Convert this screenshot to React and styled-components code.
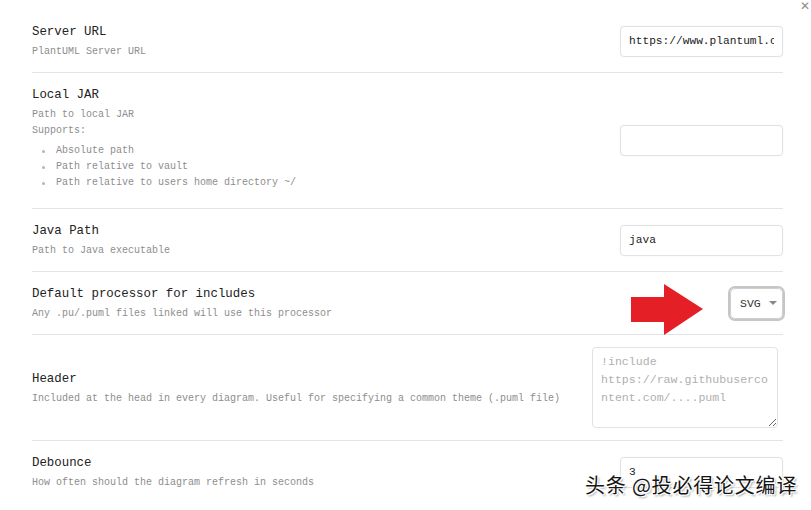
import styled, { createGlobalStyle } from "styled-components";

const Global = createGlobalStyle`
  html, body {
    margin: 0;
    padding: 0;
    background: #fff;
    overflow: hidden;
  }
  body {
    font-family: "Liberation Mono", "DejaVu Sans Mono", monospace;
  }
`;

const Modal = styled.div`
  position: relative;
  width: 811px;
  height: 510px;
  overflow: hidden;
  background: #fff;
`;

const Close = styled.div`
  position: absolute;
  top: 0;
  right: 1px;
  font-family: "DejaVu Sans", sans-serif;
  font-size: 12px;
  color: #8c8c8c;
  line-height: 13px;
`;

const List = styled.div`
  display: flex;
  flex-direction: column;
  padding: 10px 28px 0 32px;
`;

const Row = styled.div`
  position: relative;
  display: flex;
  align-items: center;
  justify-content: space-between;
  padding: 12px 0;
  border-bottom: ${(p) => (p.last ? "none" : "1px solid #e4e4e4")};
`;

const Info = styled.div`
  display: flex;
  flex-direction: column;
`;

const Title = styled.div`
  font-size: 12.4px;
  line-height: 20px;
  color: #222;
  margin-bottom: 2px;
`;

const Desc = styled.div`
  font-size: 10px;
  line-height: 16px;
  color: #8d8d8d;
`;

const Bullets = styled.ul`
  list-style: none;
  margin: 4px 0 5px;
  padding: 0;
`;

const Bullet = styled.li`
  display: flex;
  align-items: center;
  font-size: 10px;
  line-height: 16px;
  color: #8d8d8d;
`;

const Dot = styled.span`
  width: 3px;
  height: 3px;
  border-radius: 50%;
  background: #b5b5b5;
  margin: 0 11px 0 10px;
`;

const TextInput = styled.input`
  box-sizing: border-box;
  width: 163px;
  height: 31px;
  padding: 0 8px;
  border: 1px solid #e2e2e2;
  border-radius: 4px;
  box-shadow: 0 0 2px rgba(0, 0, 0, 0.06);
  font-family: "Liberation Mono", monospace;
  font-size: 11.2px;
  color: #222;
  outline: none;
`;

const Area = styled.textarea`
  box-sizing: border-box;
  width: 186px;
  height: 81px;
  margin-right: 5px;
  padding: 5px 8px;
  border: 1px solid #e2e2e2;
  border-radius: 4px;
  font-family: "Liberation Mono", monospace;
  font-size: 11.6px;
  line-height: 18px;
  color: #222;
  resize: both;
  outline: none;
  &::placeholder {
    color: #b0b0b0;
  }
`;

const Select = styled.div`
  box-sizing: border-box;
  width: 53px;
  height: 31px;
  display: flex;
  align-items: center;
  gap: 8px;
  padding-left: 9px;
  border: 1px solid #cfcfcf;
  border-radius: 5px;
  box-shadow: 0 0 0 2px #c6c6c6;
  font-size: 11.5px;
  color: #333;
`;

const Caret = styled.span`
  width: 0;
  height: 0;
  border-left: 4px solid transparent;
  border-right: 4px solid transparent;
  border-top: 4px solid #888;
`;

const Arrow = styled.svg`
  position: absolute;
  left: 599px;
  top: 12px;
`;

const Watermark = styled.div`
  position: absolute;
  left: 585px;
  top: 471px;
  font-family: "Noto Sans CJK SC", sans-serif;
  font-size: 20px;
  line-height: 28px;
  color: #151515;
  letter-spacing: 0.8px;
  text-shadow: 1px 1px 0 #fff, -1px -1px 0 #fff, 1px -1px 0 #fff, -1px 1px 0 #fff,
    2px 2px 2px rgba(0, 0, 0, 0.35);
`;

export default function App() {
  return (
    <Modal>
      <Global />
      <Close>✕</Close>
      <List>
        <Row>
          <Info>
            <Title>Server URL</Title>
            <Desc>PlantUML Server URL</Desc>
          </Info>
          <TextInput defaultValue="https://www.plantuml.com/plantuml" />
        </Row>
        <Row>
          <Info>
            <Title>Local JAR</Title>
            <Desc>Path to local JAR</Desc>
            <Desc>Supports:</Desc>
            <Bullets>
              <Bullet><Dot />Absolute path</Bullet>
              <Bullet><Dot />Path relative to vault</Bullet>
              <Bullet><Dot />Path relative to users home directory ~/</Bullet>
            </Bullets>
          </Info>
          <TextInput defaultValue="" />
        </Row>
        <Row>
          <Info>
            <Title>Java Path</Title>
            <Desc>Path to Java executable</Desc>
          </Info>
          <TextInput defaultValue="java" />
        </Row>
        <Row>
          <Info>
            <Title>Default processor for includes</Title>
            <Desc>Any .pu/.puml files linked will use this processor</Desc>
          </Info>
          <Arrow width="74" height="52" viewBox="0 0 74 52">
            <path d="M0 13 L33 13 L33 0 L72 25 L33 51 L33 38 L0 38 Z" fill="#e41f26" />
          </Arrow>
          <Select>
            SVG<Caret />
          </Select>
        </Row>
        <Row>
          <Info>
            <Title>Header</Title>
            <Desc>Included at the head in every diagram. Useful for specifying a common theme (.puml file)</Desc>
          </Info>
          <Area placeholder="!include https://raw.githubusercontent.com/....puml" />
        </Row>
        <Row last>
          <Info>
            <Title>Debounce</Title>
            <Desc>How often should the diagram refresh in seconds</Desc>
          </Info>
          <TextInput defaultValue="3" />
        </Row>
      </List>
      <Watermark>头条 @投必得论文编译</Watermark>
    </Modal>
  );
}
